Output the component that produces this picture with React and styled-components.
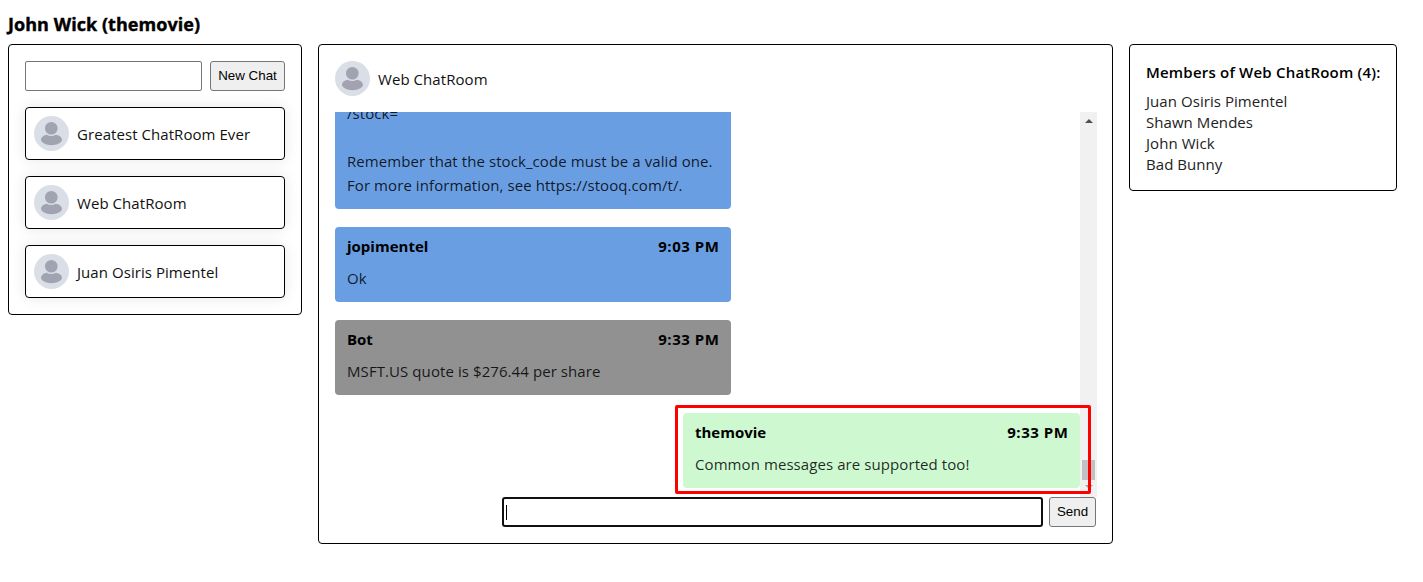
import React from "react";
import styled, { createGlobalStyle } from "styled-components";

const GlobalStyle = createGlobalStyle`
  * { box-sizing: border-box; }
  body {
    margin: 0;
    background: #fff;
    color: #000;
    font: 400 15px/21px "Open Sans", "Noto Sans", sans-serif;
  }
`;

const Page = styled.div`
  height: 582px;
  padding: 12px 8px 0;
`;

const Title = styled.h1`
  margin: 0 0 7px;
  font-size: 18px;
  line-height: 25px;
  font-weight: 700;
  letter-spacing: 0.05px;
  -webkit-text-stroke: 0.4px #000;
  white-space: nowrap;
`;

const Columns = styled.main`
  display: flex;
  align-items: flex-start;
  gap: 16px;
`;

const Panel = styled.section`
  flex: none;
  width: ${(p) => p.$width}px;
  padding: 16px;
  border: 1px solid #000;
  border-radius: 4px;
`;

const Sidebar = styled(Panel)`
  display: flex;
  flex-direction: column;
  gap: 16px;
`;

const MembersPanel = styled(Panel)`
  padding-bottom: 15px;
`;

const ChatPanel = styled(Panel)`
  display: flex;
  flex-direction: column;
  height: 500px;
`;

const NewChatRow = styled.div`
  display: flex;
  gap: 8px;
`;

const NameInput = styled.input`
  width: 177px;
  height: 30px;
  border: 1px solid #767676;
  border-radius: 2px;
  outline: none;
`;

const Button = styled.button`
  width: ${(p) => p.$width}px;
  height: 30px;
  padding: 0 0 1px;
  border: 1px solid #767676;
  border-radius: 3px;
  background: #efefef;
  color: #000;
  font: 13.333px "Liberation Sans", Arial, sans-serif;
  white-space: nowrap;
`;

const ChatCard = styled.div`
  display: flex;
  align-items: center;
  gap: 8px;
  height: 53px;
  padding: 0 8px 1px;
  border: 1px solid #000;
  border-radius: 4px;
  box-shadow: 0 0 14px rgba(0, 0, 0, 0.1);
`;

const ChatName = styled.span`
  padding-top: 2px;
  color: #111;
  letter-spacing: 0.06px;
  white-space: nowrap;
`;

const ChatHeader = styled.header`
  display: flex;
  align-items: center;
  gap: 8px;
  height: 35px;
  margin-bottom: 16px;
`;

const Feed = styled.div`
  position: relative;
  display: flex;
  height: 385px;
  margin-right: -1px;
`;

const Messages = styled.div`
  display: flex;
  flex: 1;
  flex-direction: column;
  justify-content: flex-end;
  gap: 18px;
  padding-bottom: 9px;
  overflow: hidden;
`;

const Bubble = styled.article`
  flex: none;
  align-self: ${(p) => (p.$own ? "flex-end" : "flex-start")};
  width: ${(p) => (p.$own ? 397 : 396)}px;
  padding: 7px 12px 12px;
  border-radius: 4px;
  background: ${(p) => p.$color};
`;

const BubbleHeader = styled.div`
  display: flex;
  justify-content: space-between;
  margin-bottom: 8px;
  font-weight: 700;
  line-height: 24px;
`;

const Time = styled.span`
  margin-right: -0.5px;
  letter-spacing: 0.55px;
`;

const BubbleText = styled.p`
  margin: 0;
  line-height: 24px;
  letter-spacing: 0.08px;
  color: rgba(0, 0, 0, 0.85);
  white-space: pre;
`;

const Scrollbar = styled.div`
  display: flex;
  flex-direction: column;
  align-items: center;
  width: 17px;
  padding: 7px 0 8px;
  background: #f1f1f1;
`;

const Arrow = styled.i`
  width: 0;
  height: 0;
  border: solid transparent;
  border-width: ${(p) => (p.$down ? "4px 4px 0" : "0 4px 4px")};
  border-top-color: ${(p) => (p.$down ? "#a3a3a3" : "transparent")};
  border-bottom-color: ${(p) => (p.$down ? "transparent" : "#505050")};
`;

const Thumb = styled.div`
  width: 13px;
  height: 20px;
  margin: auto 0 5px;
  background: #c1c1c1;
`;

const Highlight = styled.div`
  position: absolute;
  right: 6px;
  bottom: 3px;
  width: 416px;
  height: 89px;
  border: 3px solid #ff0000;
  border-radius: 2px;
`;

const Composer = styled.div`
  display: flex;
  justify-content: flex-end;
  gap: 6px;
`;

const MessageField = styled.div`
  display: flex;
  align-items: center;
  width: 541px;
  height: 30px;
  padding: 0 2px;
  border: 2px solid #101010;
  border-radius: 3px;
`;

const Caret = styled.span`
  width: 1px;
  height: 15px;
  background: #000;
`;

const MembersTitle = styled.h2`
  margin: 1px 0 8px;
  font-size: 15px;
  line-height: 21px;
  font-weight: 600;
  letter-spacing: 0.2px;
  white-space: nowrap;
`;

const Member = styled.div`
  line-height: 21px;
  letter-spacing: 0.06px;
  color: #222;
`;

function Avatar() {
  return (
    <svg width="35" height="35" viewBox="0 0 35 35" style={{ flex: "none" }}>
      <circle cx="17.5" cy="17.5" r="17.5" fill="#dadee7" />
      <circle cx="17.3" cy="12.2" r="6.3" fill="#a1a3b1" />
      <path
        d="M7 23.8C7 21 10.5 19 12.7 18.7Q17.3 21.3 21.9 18.7C24.5 19 28 21 28 23.8C28 26.5 22.8 29.3 17.5 29.3S7 26.5 7 23.8Z"
        fill="#a1a3b1"
      />
    </svg>
  );
}

const chats = ["Greatest ChatRoom Ever", "Web ChatRoom", "Juan Osiris Pimentel"];
const members = ["Juan Osiris Pimentel", "Shawn Mendes", "John Wick", "Bad Bunny"];
const messages = [
  {
    color: "#6a9ee3",
    text: "/stock=\n\nRemember that the stock_code must be a valid one.\nFor more information, see https://stooq.com/t/.",
  },
  { author: "jopimentel", time: "9:03 PM", color: "#6a9ee3", text: "Ok" },
  { author: "Bot", time: "9:33 PM", color: "#919191", text: "MSFT.US quote is $276.44 per share" },
  { author: "themovie", time: "9:33 PM", color: "#cef8d0", text: "Common messages are supported too!", own: true },
];

export default function App() {
  return (
    <Page>
      <GlobalStyle />
      <Title>John Wick (themovie)</Title>
      <Columns>
        <Sidebar $width={294}>
          <NewChatRow>
            <NameInput />
            <Button $width={75}>New Chat</Button>
          </NewChatRow>
          {chats.map((name) => (
            <ChatCard key={name}>
              <Avatar />
              <ChatName>{name}</ChatName>
            </ChatCard>
          ))}
        </Sidebar>
        <ChatPanel $width={795}>
          <ChatHeader>
            <Avatar />
            <ChatName>Web ChatRoom</ChatName>
          </ChatHeader>
          <Feed>
            <Messages>
              {messages.map((m) => (
                <Bubble key={m.text} $color={m.color} $own={m.own}>
                  {m.author && (
                    <BubbleHeader>
                      <span>{m.author}</span>
                      <Time>{m.time}</Time>
                    </BubbleHeader>
                  )}
                  <BubbleText>{m.text}</BubbleText>
                </Bubble>
              ))}
            </Messages>
            <Scrollbar>
              <Arrow />
              <Thumb />
              <Arrow $down />
            </Scrollbar>
            <Highlight />
          </Feed>
          <Composer>
            <MessageField>
              <Caret />
            </MessageField>
            <Button $width={47}>Send</Button>
          </Composer>
        </ChatPanel>
        <MembersPanel $width={268}>
          <MembersTitle>Members of Web ChatRoom (4):</MembersTitle>
          {members.map((name) => (
            <Member key={name}>{name}</Member>
          ))}
        </MembersPanel>
      </Columns>
    </Page>
  );
}
